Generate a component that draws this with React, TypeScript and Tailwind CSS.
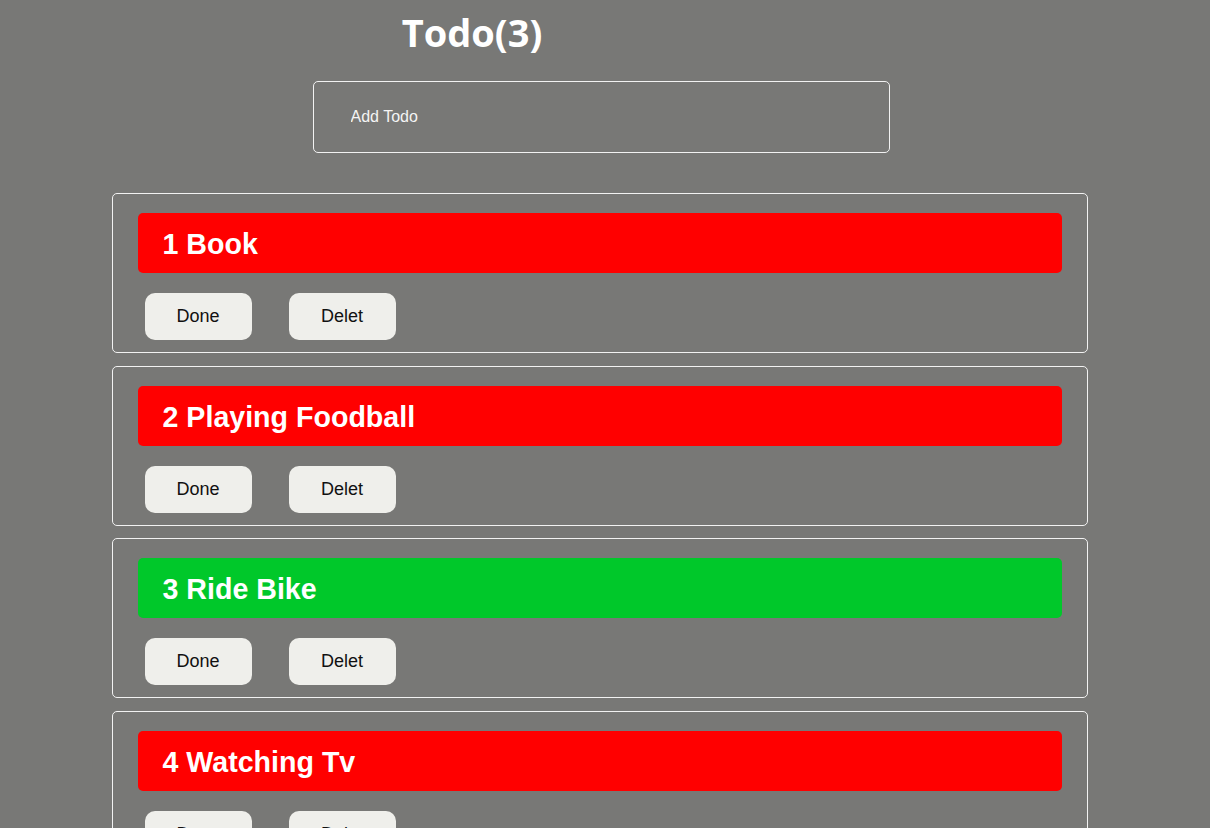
const todos = [
  { id: 1, title: "Book", done: false },
  { id: 2, title: "Playing Foodball", done: false },
  { id: 3, title: "Ride Bike", done: true },
  { id: 4, title: "Watching Tv", done: false },
];

export default function App() {
  return (
    <div className="min-h-[828px] bg-[#787876] pb-10 font-['Liberation_Sans',Arial,sans-serif]">
      <div className="w-[1200px]">
        <h1 className="w-[944px] pt-[5px] text-center font-['Open_Sans',sans-serif] text-[38px] leading-[54px] font-bold text-white">
          Todo({todos.filter((t) => !t.done).length})
        </h1>

        <div className="mt-[22px] flex justify-center pl-[2px]">
          <input
            type="text"
            placeholder="Add Todo"
            className="h-[72px] w-[577px] rounded-[5px] border border-[#f2f2f2] bg-transparent pl-[37px] text-[16px] text-white outline-none placeholder:text-[#f4f4f4]"
          />
        </div>

        <div className="mx-auto mt-[40px] flex w-[977px] flex-col gap-[12.5px] pr-[1px]">
          {todos.map((todo) => (
            <div
              key={todo.id}
              className="rounded-[5px] border border-[#f2f2f2] px-[25px] pt-[19px] pb-[12px]"
            >
              <div
                className={
                  "flex h-[60px] items-center rounded-[5px] px-[25px] pt-[3px] text-[28.6px] font-bold text-white " +
                  (todo.done ? "bg-[#00c82a]" : "bg-[#ff0000]")
                }
              >
                {todo.id} {todo.title}
              </div>
              <div className="mt-[20px] flex gap-[37px] pl-[7px]">
                <button className="h-[47px] w-[107px] rounded-[10px] bg-[#efefeb] text-[18px] text-[#111]">
                  Done
                </button>
                <button className="h-[47px] w-[107px] rounded-[10px] bg-[#efefeb] text-[18px] text-[#111]">
                  Delet
                </button>
              </div>
            </div>
          ))}
        </div>
      </div>
    </div>
  );
}
